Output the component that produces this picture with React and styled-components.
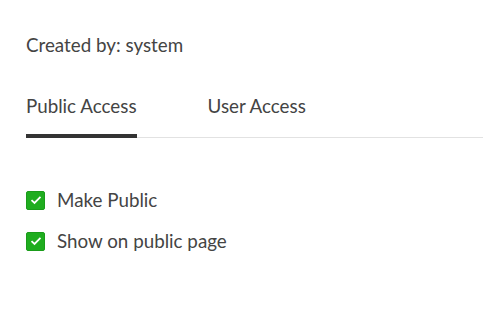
import React, { useState } from 'react';
import styled, { createGlobalStyle } from 'styled-components';

const Global = createGlobalStyle`
  html, body {
    margin: 0;
    padding: 0;
    background: #fff;
  }
  body {
    font-family: 'Lato', 'Open Sans', sans-serif;
    color: #444;
  }
`

const Page = styled.div`
  padding: 33px 0 0 26px;
`

const CreatedBy = styled.div`
  font-size: 18.8px;
  line-height: 24px;
  color: #444;
`

const Tabs = styled.div`
  display: flex;
  margin-top: 37px;
  border-bottom: 1px solid #e2e2e2;
`

const Tab = styled.div`
  font-size: 18.8px;
  line-height: 24px;
  padding-bottom: 16px;
  margin-right: 71px;
  color: #444;
  border-bottom: 4px solid ${({ active }) => (active ? '#333' : 'transparent')};
  margin-bottom: -1px;
  cursor: pointer;
`

const Options = styled.div`
  display: flex;
  flex-direction: column;
  gap: 21px;
  margin-top: 52px;
`

const Option = styled.label`
  display: flex;
  align-items: center;
  gap: 12px;
  font-size: 18.8px;
  line-height: 20px;
  color: #444;
  cursor: pointer;
`

const Box = styled.span`
  width: 19px;
  height: 19px;
  box-sizing: border-box;
  border-radius: 2px;
  background: ${({ checked }) => (checked ? '#1fad1f' : '#fff')};
  border: 1px solid ${({ checked }) => (checked ? '#1a9c1a' : '#999')};
  display: flex;
  align-items: center;
  justify-content: center;
`

const Check = () => (
  <svg width="12" height="10" viewBox="0 0 12 10">
    <path d="M1.5 5.2 L4.5 8 L10.5 1.8" fill="none" stroke="#fff" strokeWidth="1.8" />
  </svg>
)

export default function App() {
  const [tab, setTab] = useState(0)
  const [opts, setOpts] = useState([true, true])
  const labels = ['Make Public', 'Show on public page']

  return (
    <Page>
      <Global />
      <CreatedBy>Created by: system</CreatedBy>
      <Tabs>
        <Tab active={tab === 0} onClick={() => setTab(0)}>Public Access</Tab>
        <Tab active={tab === 1} onClick={() => setTab(1)}>User Access</Tab>
      </Tabs>
      <Options>
        {labels.map((l, i) => (
          <Option key={l} onClick={() => setOpts(o => o.map((v, j) => (j === i ? !v : v)))}>
            <Box checked={opts[i]}>{opts[i] && <Check />}</Box>
            {l}
          </Option>
        ))}
      </Options>
    </Page>
  )
}
